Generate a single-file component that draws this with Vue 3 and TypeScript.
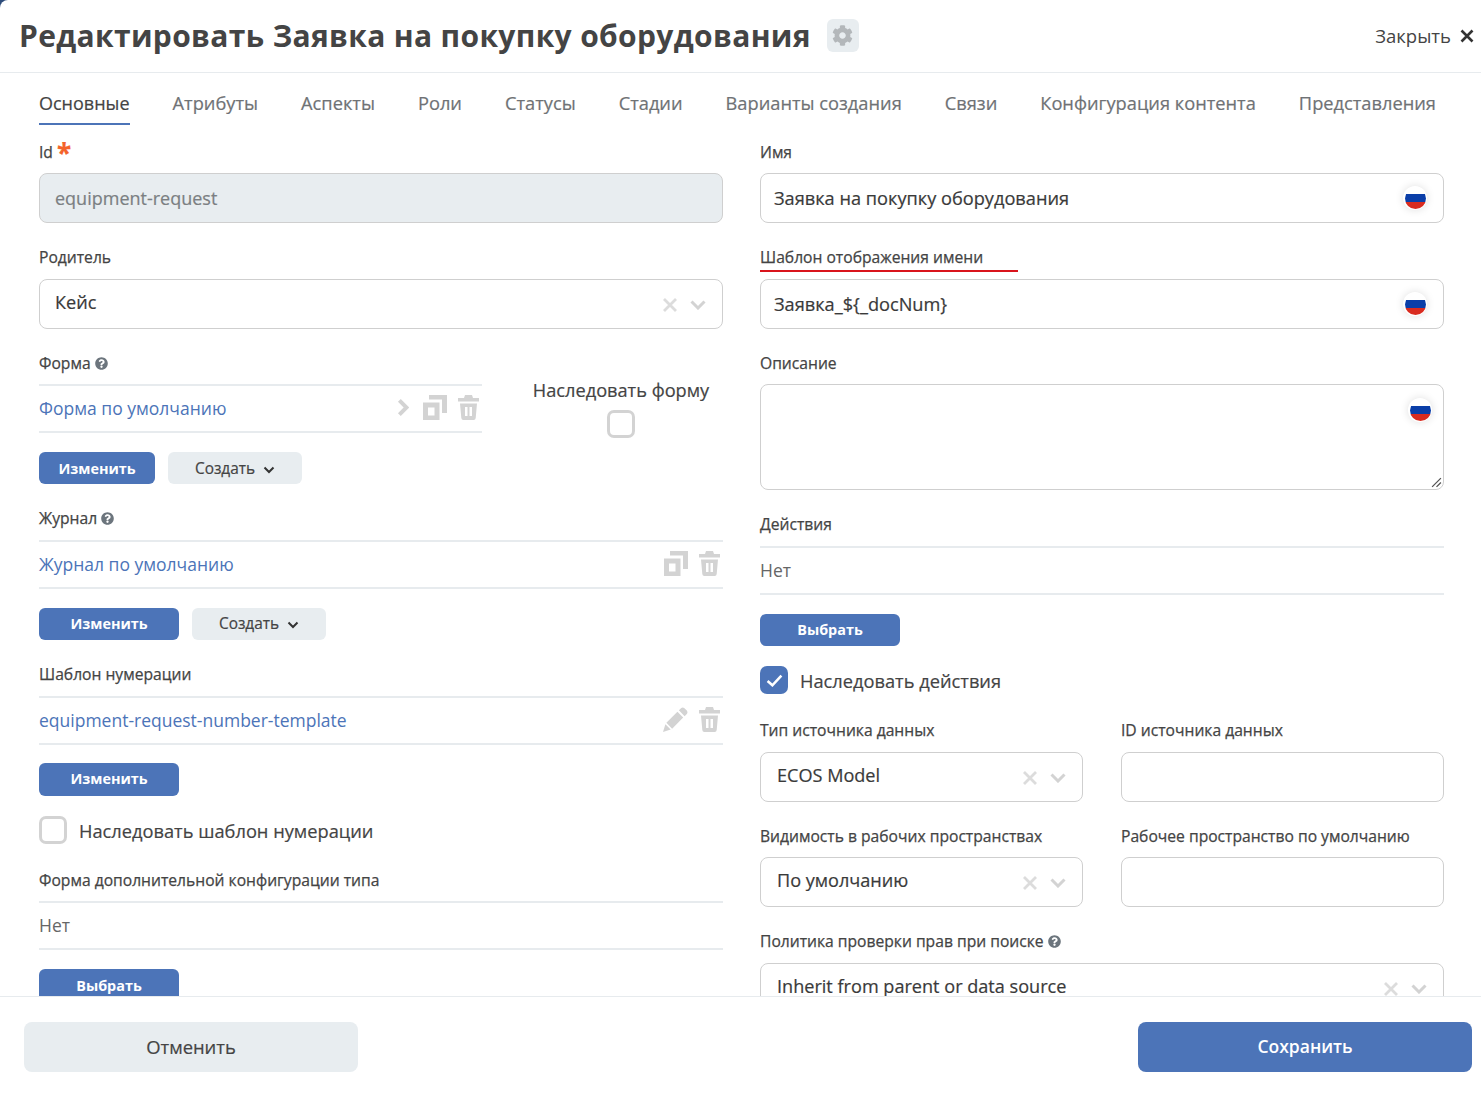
<template>
  <div class="modal">
    <header class="head">
      <h1>Редактировать Заявка на покупку оборудования</h1>
      <span class="gear-box">
        <svg class="gear" viewBox="0 0 512 512"><path :d="gearPath" /></svg>
      </span>
      <span class="close">Закрыть
        <svg viewBox="0 0 14 14" class="close-x"><path d="M1.5 1.5 12.5 12.5M12.5 1.5 1.5 12.5" /></svg>
      </span>
    </header>

    <nav class="tabs">
      <a v-for="(t, i) in tabs" :key="t" :class="{ active: i === 0 }">{{ t }}</a>
    </nav>

    <div class="body">
      <div class="cols">
        <!-- left column -->
        <div class="col">
          <div class="field">
            <label>Id <span class="req">*</span></label>
            <div class="input disabled">equipment-request</div>
          </div>
          <div class="field second">
            <label>Родитель</label>
            <div class="input select parent">
              <span>Кейс</span>
              <svg class="sel-x" viewBox="0 0 16 16"><path d="M2 2 14 14M14 2 2 14" /></svg>
              <svg class="sel-chev" viewBox="0 0 16 10"><path d="M1.5 1.5 8 8l6.5-6.5" /></svg>
            </div>
          </div>

          <div class="form-row">
            <div class="form-main">
              <label>Форма <svg class="help" viewBox="0 0 512 512"><path :d="helpPath" /></svg></label>
              <div class="lined">
                <a>Форма по умолчанию</a>
                <span class="icons">
                  <svg class="ic chev" viewBox="0 0 13 20"><path d="M2.5 2.5 10 10l-7.5 7.5" /></svg>
                  <svg class="ic" viewBox="0 0 24 25"><path :d="copyPath" fill-rule="evenodd" /></svg>
                  <svg class="ic" viewBox="0 0 21 25"><path :d="trashPath" fill-rule="evenodd" /></svg>
                </span>
              </div>
              <div class="btns">
                <button class="btn primary w116">Изменить</button>
                <button class="btn light">Создать
                  <svg class="drop" viewBox="0 0 12 8"><path d="M1.5 1.5 6 6l4.5-4.5" /></svg>
                </button>
              </div>
            </div>
            <div class="inherit-form">
              <span>Наследовать форму</span>
              <i class="check"></i>
            </div>
          </div>

          <div class="block">
            <label>Журнал <svg class="help" viewBox="0 0 512 512"><path :d="helpPath" /></svg></label>
            <div class="lined">
              <a>Журнал по умолчанию</a>
              <span class="icons">
                <svg class="ic" viewBox="0 0 24 25"><path :d="copyPath" fill-rule="evenodd" /></svg>
                <svg class="ic" viewBox="0 0 21 25"><path :d="trashPath" fill-rule="evenodd" /></svg>
              </span>
            </div>
            <div class="btns">
              <button class="btn primary w140">Изменить</button>
              <button class="btn light">Создать
                <svg class="drop" viewBox="0 0 12 8"><path d="M1.5 1.5 6 6l4.5-4.5" /></svg>
              </button>
            </div>
          </div>

          <div class="block numbering">
            <label>Шаблон нумерации</label>
            <div class="lined">
              <a>equipment-request-number-template</a>
              <span class="icons">
                <svg class="ic" viewBox="0 0 26 26"><path :d="pencilPath" /></svg>
                <svg class="ic" viewBox="0 0 21 25"><path :d="trashPath" fill-rule="evenodd" /></svg>
              </span>
            </div>
            <div class="btns">
              <button class="btn primary w140">Изменить</button>
            </div>
          </div>

          <div class="check-row">
            <i class="check"></i>
            <span>Наследовать шаблон нумерации</span>
          </div>

          <div class="block extra">
            <label>Форма дополнительной конфигурации типа</label>
            <div class="lined plain">Нет</div>
            <div class="btns">
              <button class="btn primary w140">Выбрать</button>
            </div>
          </div>
        </div>

        <!-- right column -->
        <div class="col">
          <div class="field">
            <label>Имя</label>
            <div class="input ml">
              <span>Заявка на покупку оборудования</span>
              <span class="flag"><i></i></span>
            </div>
          </div>
          <div class="field second">
            <label class="marked">Шаблон отображения имени</label>
            <div class="input ml">
              <span>Заявка_${_docNum}</span>
              <span class="flag"><i></i></span>
            </div>
          </div>
          <div class="field-desc">
            <label>Описание</label>
            <div class="textarea">
              <span class="flag"><i></i></span>
              <svg class="grip" viewBox="0 0 10 10"><path d="M9 1 1 9M9 5 5 9" /></svg>
            </div>
          </div>
          <div class="block actions">
            <label>Действия</label>
            <div class="lined plain">Нет</div>
            <div class="btns">
              <button class="btn primary w140">Выбрать</button>
            </div>
          </div>
          <div class="check-row">
            <i class="check checked">
              <svg viewBox="0 0 16 12"><path d="M1.5 6.5 6 10.5l8.5-9" /></svg>
            </i>
            <span>Наследовать действия</span>
          </div>

          <div class="pairs">
            <div class="pair" v-for="p in pairs" :key="p.a">
              <label>{{ p.a }}</label>
              <div class="input select">
                <span>{{ p.value }}</span>
                <svg class="sel-x" viewBox="0 0 16 16"><path d="M2 2 14 14M14 2 2 14" /></svg>
                <svg class="sel-chev" viewBox="0 0 16 10"><path d="M1.5 1.5 8 8l6.5-6.5" /></svg>
              </div>
              <label>{{ p.b }}</label>
              <div class="input"></div>
            </div>
          </div>

          <div class="policy">
            <label>Политика проверки прав при поиске <svg class="help" viewBox="0 0 512 512"><path :d="helpPath" /></svg></label>
            <div class="input select">
              <span>Inherit from parent or data source</span>
              <svg class="sel-x" viewBox="0 0 16 16"><path d="M2 2 14 14M14 2 2 14" /></svg>
              <svg class="sel-chev" viewBox="0 0 16 10"><path d="M1.5 1.5 8 8l6.5-6.5" /></svg>
            </div>
          </div>
        </div>
      </div>
    </div>

    <footer class="foot">
      <button class="btn big light">Отменить</button>
      <button class="btn big primary">Сохранить</button>
    </footer>
  </div>
</template>

<script setup lang="ts">
const tabs: string[] = [
  'Основные',
  'Атрибуты',
  'Аспекты',
  'Роли',
  'Статусы',
  'Стадии',
  'Варианты создания',
  'Связи',
  'Конфигурация контента',
  'Представления'
]

const pairs = [
  { a: 'Тип источника данных', b: 'ID источника данных', value: 'ECOS Model' },
  { a: 'Видимость в рабочих пространствах', b: 'Рабочее пространство по умолчанию', value: 'По умолчанию' }
]

const helpPath =
  'M504 256c0 136.997-111.043 248-248 248S8 392.997 8 256C8 119.083 119.043 8 256 8s248 111.083 248 248zM262.655 90c-54.497 0-89.255 22.957-116.549 63.758-3.536 5.286-2.353 12.415 2.715 16.258l34.699 26.31c5.205 3.947 12.621 3.008 16.665-2.122 17.864-22.658 30.113-35.797 57.303-35.797 20.429 0 45.698 13.148 45.698 32.958 0 14.976-12.363 22.667-32.534 33.976C247.128 238.528 216 254.941 216 296v4c0 6.627 5.373 12 12 12h56c6.627 0 12-5.373 12-12v-1.333c0-28.462 83.186-29.647 83.186-106.667 0-58.002-60.165-102-116.531-102zM256 338c-25.365 0-46 20.635-46 46 0 25.364 20.635 46 46 46s46-20.636 46-46c0-25.365-20.635-46-46-46z'
const gearPath =
  'M487.4 315.7l-42.6-24.6c4.3-23.2 4.3-47 0-70.2l42.6-24.6c4.9-2.8 7.1-8.6 5.5-14-11.1-35.6-30-67.8-54.7-94.6-3.8-4.1-10-5.1-14.8-2.3L380.8 110c-17.9-15.4-38.5-27.3-60.8-35.1V25.8c0-5.6-3.9-10.5-9.4-11.7-36.7-8.2-74.3-7.8-109.2 0-5.5 1.2-9.4 6.1-9.4 11.7V75c-22.2 7.9-42.8 19.8-60.8 35.1L88.7 85.5c-4.9-2.8-11-1.9-14.8 2.3-24.7 26.7-43.6 58.9-54.7 94.6-1.7 5.4.6 11.2 5.5 14L67.3 221c-4.3 23.2-4.3 47 0 70.2l-42.6 24.6c-4.9 2.8-7.1 8.6-5.5 14 11.1 35.6 30 67.8 54.7 94.6 3.8 4.1 10 5.1 14.8 2.3l42.6-24.6c17.9 15.4 38.5 27.3 60.8 35.1v49.2c0 5.6 3.9 10.5 9.4 11.7 36.7 8.2 74.3 7.8 109.2 0 5.5-1.2 9.4-6.1 9.4-11.7v-49.2c22.2-7.9 42.8-19.8 60.8-35.1l42.6 24.6c4.9 2.8 11 1.9 14.8-2.3 24.7-26.7 43.6-58.9 54.7-94.6 1.5-5.5-.7-11.3-5.6-14.1zM256 336c-44.1 0-80-35.9-80-80s35.9-80 80-80 80 35.9 80 80-35.9 80-80 80z'
const copyPath = 'M6 0h18v18h-5V4.5H6V0zM0 7.5h16.5V25H0V7.5zm5 5v8h6.5v-8H5z'
const trashPath =
  'M7 0h7l1 3h6v3.5H0V3h6l1-3zM2 8.5h17l-1.3 14.5q-.2 2-2 2H5.3q-1.8 0-2-2L2 8.5zM7 12v9h2.5v-9H7zm4.5 0v9H14v-9h-2.5z'
const pencilPath =
  'M19 1q1.5-1 3 0l3 3q1 1.5 0 3l-2.5 2.5-6-6L19 1zM15 5l6 6L9.5 22.5l-6-6L15 5zM2.5 18l5.5 5.5L0 26l2.500-8z'
</script>

<style>
html,
body {
  margin: 0;
  background: #2e4d7b;
}
</style>

<style scoped>
.modal {
  width: 1481px;
  height: 1103px;
  display: flex;
  flex-direction: column;
  overflow: hidden;
  background: #fff;
  border-top-left-radius: 8px;
  color: #444;
  font-family: "Open Sans", sans-serif;
}

.head {
  flex: none;
  height: 70px;
  display: flex;
  align-items: center;
  padding: 0 7px 2px 19px;
  border-bottom: 1px solid #e7ebee;
}

h1 {
  margin: 0;
  font-size: 30px;
  font-weight: 700;
  letter-spacing: 0.35px;
  color: #444;
  white-space: nowrap;
}

.gear-box {
  width: 32px;
  height: 33px;
  margin-left: 16px;
  border-radius: 6px;
  background: #e8edf0;
  display: flex;
  align-items: center;
  justify-content: center;
}

.gear {
  width: 21px;
  height: 21px;
  fill: #b3b7ba;
}

.close {
  margin-left: auto;
  display: flex;
  align-items: center;
  gap: 9px;
  font-size: 18.5px;
  color: #444;
}

.close-x {
  width: 14px;
  height: 14px;
  margin-top: 1px;
  fill: none;
  stroke: #333;
  stroke-width: 2.6;
}

.tabs {
  flex: none;
  height: 52px;
  padding-left: 39px;
  display: flex;
  gap: 43px;
}

.tabs a {
  padding-top: 17px;
  height: 52px;
  box-sizing: border-box;
  font-size: 18.25px;
  line-height: 25px;
  color: #6f7275;
  -webkit-text-stroke: 0.2px;
  white-space: nowrap;
}

.tabs a.active {
  padding-top: 18px;
  font-size: 18px;
  color: #444;
  border-bottom: 2px solid #4c74b8;
}

.body {
  flex: none;
  height: 871px;
  overflow: hidden;
}

.cols {
  padding: 17px 37px 0 39px;
  display: grid;
  grid-template-columns: 684px 684px;
  gap: 37px;
}

label {
  display: block;
  font-size: 15.65px;
  line-height: 20px;
  color: #444;
  -webkit-text-stroke: 0.25px;
}

.req {
  color: #f4632a;
  font-size: 26px;
  font-weight: 700;
  line-height: 0;
  vertical-align: -5px;
}

.field {
  height: 105px;
}

.field label {
  padding-bottom: 11px;
}

.field.second {
  height: 106px;
}

.field.second label {
  padding-bottom: 12px;
}

.marked {
  position: relative;
}

.marked::after {
  content: "";
  position: absolute;
  left: 0;
  top: 23px;
  width: 258px;
  height: 2px;
  background: #d9141c;
}

.input {
  box-sizing: border-box;
  height: 50px;
  display: flex;
  align-items: center;
  padding: 0 15px;
  border: 1px solid #cfcfcf;
  border-radius: 8px;
  font-size: 18.2px;
  color: #3a3a3a;
  -webkit-text-stroke: 0.2px;
  background: #fff;
}

.input.disabled {
  background: #e8edf0;
  color: #7b7f82;
  font-size: 18px;
}

.input.ml {
  padding: 0 13px;
  justify-content: space-between;
}

.input.select {
  padding: 0 16px;
  font-size: 18.1px;
}

.input.select.parent {
  padding-left: 15px;
}

.input.select > span {
  flex: 1;
  white-space: nowrap;
  transform: translateY(-2px);
}

.sel-x {
  width: 16px;
  height: 16px;
  margin: 2px 12px 0 0;
  fill: none;
  stroke: #dcdcdc;
  stroke-width: 2.8;
}

.sel-chev {
  width: 16px;
  height: 10px;
  margin-top: 2px;
  fill: none;
  stroke: #d3d3d3;
  stroke-width: 3;
}

.flag {
  width: 24px;
  height: 24px;
  box-sizing: border-box;
  padding: 1.5px;
  margin-right: 3px;
  border-radius: 50%;
  background: #fff;
  box-shadow: 0 0 8px rgba(0, 0, 0, 0.13);
  display: block;
}

.flag i {
  display: block;
  width: 100%;
  height: 100%;
  border-radius: 50%;
  background: linear-gradient(#fff 0 27%, #0a3ea8 27% 68%, #d92b1f 68%);
}

.form-row {
  display: flex;
  height: 155px;
}

.form-main {
  width: 443px;
  flex: none;
}

.lined {
  box-sizing: border-box;
  height: 49px;
  margin-top: 11px;
  padding-bottom: 2px;
  border-top: 2px solid #e7ebee;
  border-bottom: 2px solid #e7ebee;
  display: flex;
  align-items: center;
  justify-content: space-between;
  font-size: 17.5px;
  color: #4c74b8;
}

.block .lined {
  margin-top: 12px;
}

.block.extra .lined {
  margin-top: 11px;
}

.lined a {
  color: #4c74b8;
}

.lined.plain {
  color: #666;
}

.icons {
  display: flex;
  align-items: center;
  gap: 11px;
  padding-right: 3px;
}

.ic {
  height: 25px;
  width: auto;
  fill: #d3d3d3;
}

.ic.chev {
  height: 19px;
  margin-right: 3px;
  fill: none;
  stroke: #d3d3d3;
  stroke-width: 4.2;
}

.btns {
  display: flex;
  gap: 13px;
  margin-top: 19px;
}

.btn {
  height: 32px;
  border: none;
  border-radius: 6px;
  font-family: inherit;
  font-size: 14.4px;
  padding: 0;
}

.block .btn {
  padding-bottom: 2px;
}

.block.extra .btn {
  padding-bottom: 0;
}

.numbering .btns {
  margin-top: 18px;
}

.numbering .btn {
  height: 33px;
}

.btn.primary {
  background: #4c74b8;
  color: #fff;
  font-weight: 700;
}

.btn.light {
  width: 134px;
  background: #e8edf0;
  color: #444;
  font-size: 15.4px;
  -webkit-text-stroke: 0.2px;
}

.w116 {
  width: 116px;
}

.w140 {
  width: 140px;
}

.drop {
  width: 12px;
  height: 8px;
  margin-left: 4px;
  fill: none;
  stroke: #333;
  stroke-width: 2;
}

.inherit-form {
  flex: 1;
  padding: 25px 0 0 37px;
  display: flex;
  flex-direction: column;
  align-items: center;
  gap: 7px;
  font-size: 18.2px;
  -webkit-text-stroke: 0.2px;
  line-height: 25px;
}

.check {
  display: block;
  flex: none;
  box-sizing: border-box;
  width: 28px;
  height: 28px;
  border: 3px solid #d3d3d3;
  border-radius: 7px;
  background: #fff;
}

.check.checked {
  background: #4c74b8;
  border: none;
  display: flex;
  align-items: center;
  justify-content: center;
}

.check.checked svg {
  width: 17px;
  height: 13px;
  fill: none;
  stroke: #fff;
  stroke-width: 2.4;
}

.block {
  height: 156px;
}

.block.numbering {
  height: 152px;
}

.check-row {
  height: 28px;
  display: flex;
  align-items: center;
  gap: 12px;
  font-size: 18.25px;
  -webkit-text-stroke: 0.2px;
}

.extra {
  margin-top: 26px;
}

.field-desc {
  height: 161px;
}

.textarea {
  position: relative;
  box-sizing: border-box;
  height: 106px;
  margin-top: 11px;
  border: 1px solid #cfcfcf;
  border-radius: 8px;
}

.textarea .flag {
  position: absolute;
  top: 13px;
  right: 11px;
  margin: 0;
}

.grip {
  position: absolute;
  right: 1px;
  bottom: 1px;
  width: 11px;
  height: 11px;
  fill: none;
  stroke: #555;
  stroke-width: 1.2;
}

.actions {
  height: 152px;
}

.pairs {
  margin-top: 26px;
  display: flex;
  flex-direction: column;
  gap: 24px;
}

.pair {
  display: grid;
  grid-template-columns: 323px 323px;
  grid-template-rows: 20px 50px;
  grid-auto-flow: column;
  column-gap: 38px;
  row-gap: 12px;
}

.pair + .pair {
  row-gap: 11px;
}

.policy {
  margin-top: 24px;
}

.policy .input {
  margin-top: 12px;
}

.help {
  width: 13px;
  height: 13px;
  fill: #6c757d;
  vertical-align: -1px;
}

.foot {
  flex: none;
  box-sizing: border-box;
  height: 107px;
  border-top: 1px solid #e7ebee;
  background: #fff;
  padding: 25px 9px 0 24px;
  display: flex;
  justify-content: space-between;
  align-items: flex-start;
}

.btn.big {
  width: 334px;
  height: 50px;
  padding-bottom: 2px;
  border-radius: 8px;
  font-size: 18.4px;
}

.foot .btn.primary {
  font-size: 17.5px;
  font-weight: 600;
}
</style>
